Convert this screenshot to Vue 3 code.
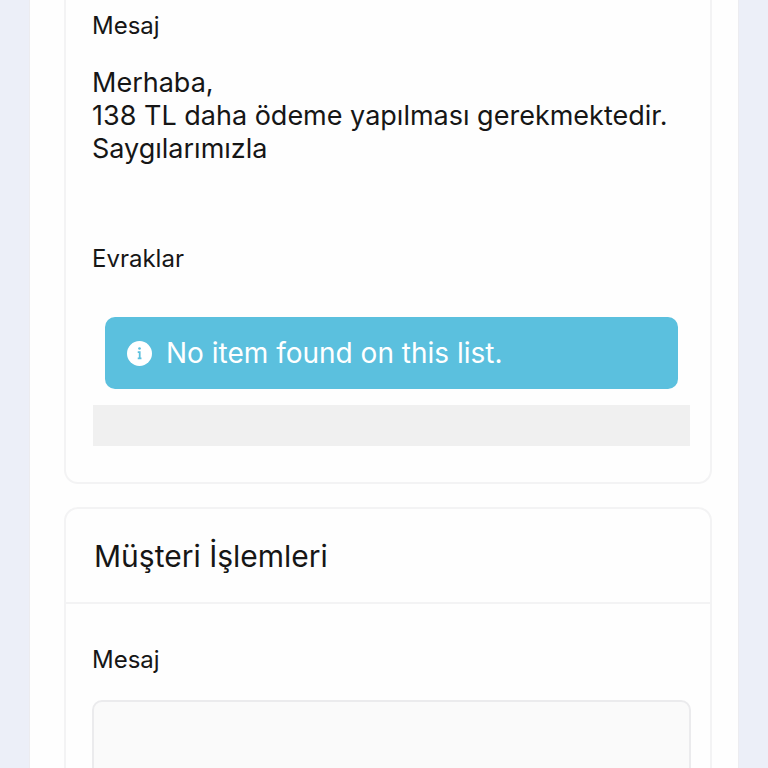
<template>
    <div class="page">
        <main class="panel">
            <!-- Message received from the office -->
            <section class="card card-continued">
                <div class="card-body">
                    <h3 class="label">Mesaj</h3>
                    <p class="message">{{ message }}</p>

                    <h3 class="label">Evraklar</h3>
                    <div class="alert" role="status">
                        <svg class="alert-icon" viewBox="0 0 24 24" aria-hidden="true">
                            <circle cx="12" cy="12" r="12" fill="#fff" />
                            <circle cx="12" cy="7.2" r="1.3" fill="#5bc0de" />
                            <path d="M10.3 10.6h1.9v5.8M10.3 16.6h3.6" fill="none" stroke="#5bc0de" stroke-width="1.7" />
                        </svg>
                        <span>No item found on this list.</span>
                    </div>
                    <div class="list-footer"></div>
                </div>
            </section>

            <!-- Customer reply -->
            <section class="card">
                <header class="card-header">
                    <h2>Müşteri İşlemleri</h2>
                </header>
                <div class="card-body">
                    <label class="label" for="reply">Mesaj</label>
                    <textarea id="reply" v-model="reply" class="reply"></textarea>
                </div>
            </section>
        </main>
    </div>
</template>

<script setup>
import { ref } from 'vue';

const message = `Merhaba,
138 TL daha ödeme yapılması gerekmektedir.
Saygılarımızla`;

const reply = ref('');
</script>

<style>
body {
    margin: 0;
    background-color: #eceff8;
}
</style>

<style scoped>
.page {
    box-sizing: border-box;
    height: 100vh;
    padding: 0 29px;
    overflow: hidden;
    background-color: #eceff8;
    color: #161616;
    font-family: Inter, "Open Sans", sans-serif;
}

.panel {
    display: flex;
    flex-direction: column;
    gap: 23px;
    padding: 0 26px 32px 34px;
    border: 1px solid #ececf0;
    border-width: 0 1px;
    background-color: #fefefe;
}

.card {
    border: 2px solid #f3f3f4;
    border-radius: 14px;
}

.card-continued {
    border-top: none;
    border-radius: 0 0 14px 14px;
}

.card-header {
    padding: 28px 28px 27px;
    border-bottom: 2px solid #f3f3f4;
}

.card-header h2 {
    margin: 0;
    font-size: 30px;
    font-weight: 400;
    line-height: 38px;
}

.card-body {
    padding: 40px 19px 36px 26px;
}

.card-continued .card-body {
    padding-top: 10px;
}

.label {
    display: block;
    margin: 0;
    font-size: 24px;
    font-weight: 400;
    line-height: 32px;
}

.message {
    margin: 24px 0 78px;
    font-size: 27px;
    line-height: 33px;
    white-space: pre-line;
}

.alert {
    display: flex;
    align-items: center;
    gap: 14px;
    margin: 42px 13px 16px;
    padding: 20px 22px;
    border-radius: 10px;
    background-color: #5bc0de;
    color: #fff;
    font-size: 28px;
    line-height: 32px;
}

.alert-icon {
    width: 25px;
    height: 25px;
}

.list-footer {
    height: 41px;
    margin: 0 1px;
    background-color: #f0f0f0;
}

.reply {
    display: block;
    box-sizing: border-box;
    width: 100%;
    height: 200px;
    margin: 24px 0 0;
    padding: 16px;
    border: 2px solid #ebebed;
    border-radius: 10px;
    background-color: #fafafa;
    color: inherit;
    font: inherit;
    font-size: 27px;
    resize: none;
}
</style>
